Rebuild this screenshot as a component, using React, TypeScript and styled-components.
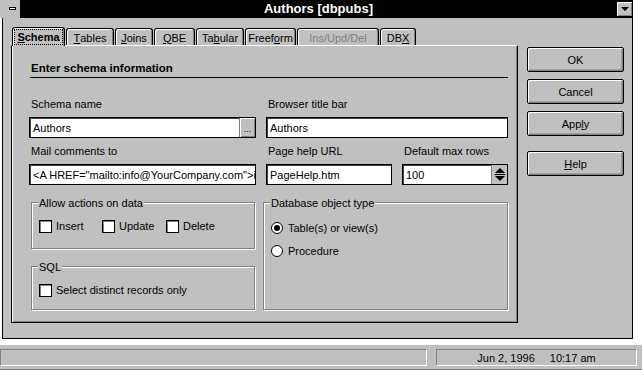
import React from "react";
import styled, { createGlobalStyle } from "styled-components";

const Global = createGlobalStyle`
  html, body { margin: 0; padding: 0; background: #fff; }
  body {
    width: 642px; height: 370px; overflow: hidden;
    font-family: "Liberation Sans", Arial, sans-serif;
    font-size: 11px; color: #000;
  }
`;

const Screen = styled.div`
  width: 642px;
  height: 370px;
  display: flex;
  flex-direction: column;
  background: #fff;
`;

const Window = styled.div`
  width: 633px;
  display: flex;
  flex-direction: column;
`;

const TitleBar = styled.div`
  height: 18px;
  display: flex;
  background: #000;
  padding-right: 1px;
`;

const SysBox = styled.div`
  width: 20px;
  height: 18px;
  box-sizing: border-box;
  background: #c0c0c0;
  padding: 7px 0 0 9px;
`;

const SysDash = styled.div`
  width: 7px;
  height: 3px;
  box-sizing: border-box;
  border: 1px solid #000;
  background: #fff;
`;

const Title = styled.div`
  flex: 1;
  color: #fff;
  font-weight: 700;
  font-size: 13px;
  line-height: 18px;
  text-align: center;
`;

const ArrowButton = styled.div`
  width: 15px;
  height: 14px;
  margin-top: 2px;
  box-sizing: border-box;
  background: #c0c0c0;
  box-shadow: inset 1px 1px 0 #fff, inset -1px -1px 0 #808080;
  display: flex;
  align-items: center;
  justify-content: center;
`;

const DownTri = styled.div`
  width: 0;
  height: 0;
  border-left: 4px solid transparent;
  border-right: 4px solid transparent;
  border-top: 4px solid #000;
`;

const Frame = styled.div`
  margin-left: 2px;
  width: 631px;
  height: 321px;
  box-sizing: border-box;
  border: 1px solid #000;
  border-top: none;
  background: #c0c0c0;
  display: flex;
  align-items: flex-start;
  padding: 9px 0 0 8px;
`;

const LeftCol = styled.div`
  width: 507px;
  display: flex;
  flex-direction: column;
`;

const TabRow = styled.div`
  height: 18px;
  display: flex;
  align-items: flex-end;
  padding-left: 1px;
`;

const Tab = styled.div<{ $w: number; $active?: boolean; $disabled?: boolean }>`
  box-sizing: border-box;
  width: ${(p) => p.$w}px;
  height: ${(p) => (p.$active ? 19 : 17)}px;
  margin-bottom: ${(p) => (p.$active ? -1 : 0)}px;
  margin-right: 1px;
  border: 1px solid #000;
  border-bottom: none;
  border-radius: 3px 3px 0 0;
  background: #c0c0c0;
  box-shadow: inset 1px 1px 0 #fff, inset -1px 0 0 #808080;
  display: flex;
  align-items: center;
  justify-content: center;
  padding-top: ${(p) => (p.$active ? 0 : 1)}px;
  font-weight: ${(p) => (p.$active ? 700 : 400)};
  color: ${(p) => (p.$disabled ? "#808080" : "#000")};
  position: relative;
  z-index: ${(p) => (p.$active ? 2 : 1)};
  white-space: nowrap;
`;

const Focus = styled.span`
  outline: 1px dotted #000;
  outline-offset: 1px;
  padding: 0 1px;
  line-height: 12px;
`;

const Panel = styled.div`
  box-sizing: border-box;
  width: 507px;
  height: 278px;
  background: #c0c0c0;
  border: 1px solid #000;
  border-top-color: #fff;
  box-shadow: inset 1px 0 0 #fff, inset -1px -1px 0 #808080;
  padding: 15px 9px 0 17px;
  position: relative;
  z-index: 1;
`;

const Heading = styled.div`
  font-weight: 700;
  font-size: 11.5px;
  line-height: 14px;
  height: 14px;
  padding-left: 2px;
`;

const Rule = styled.div`
  height: 1px;
  background: #000;
  margin: 2px 0 0 1px;
`;

const FieldGrid = styled.div`
  display: grid;
  grid-template-columns: 227px 242px;
  column-gap: 10px;
  row-gap: 6px;
  margin-top: 19px;
`;

const SubGrid = styled.div`
  display: grid;
  grid-template-columns: 126px 106px;
  column-gap: 10px;
`;

const Field = styled.div`
  display: flex;
  flex-direction: column;
  gap: 6px;
`;

const Label = styled.div`
  line-height: 14px;
  height: 14px;
  white-space: nowrap;
  padding-left: 2px;
`;

const InputBox = styled.div`
  box-sizing: border-box;
  height: 21px;
  border: 1px solid #000;
  box-shadow: inset 1px 1px 0 #404040;
  background: #fff;
  display: flex;
  overflow: hidden;
`;

const TextInput = styled.input`
  flex: 1;
  min-width: 0;
  border: 0;
  outline: 0;
  padding: 1px 0 0 3px;
  margin: 0;
  font: inherit;
  font-size: 11px;
  background: transparent;
  color: #000;
`;

const DotsButton = styled.div`
  width: 16px;
  box-sizing: border-box;
  background: #c0c0c0;
  border-left: 1px solid #808080;
  box-shadow: inset 1px 1px 0 #fff, inset -1px -1px 0 #808080;
  display: flex;
  align-items: flex-end;
  justify-content: center;
  font-size: 9px;
  line-height: 12px;
  padding-bottom: 2px;
`;

const Spinner = styled.div`
  width: 16px;
  box-sizing: border-box;
  background: #c0c0c0;
  border-left: 1px solid #808080;
  display: flex;
  flex-direction: column;
  align-items: center;
  justify-content: center;
  gap: 1px;
`;

const UpTri = styled.div`
  width: 0;
  height: 0;
  border-left: 5px solid transparent;
  border-right: 5px solid transparent;
  border-bottom: 5px solid #000;
`;

const SpinDown = styled.div`
  width: 0;
  height: 0;
  border-left: 5px solid transparent;
  border-right: 5px solid transparent;
  border-top: 5px solid #000;
`;

const SpinLine = styled.div`
  width: 10px;
  height: 1px;
  background: #000;
`;

const GroupRow = styled.div`
  display: grid;
  grid-template-columns: 224px 245px;
  column-gap: 8px;
  margin: 17px 0 0 2px;
`;

const Stack = styled.div`
  display: flex;
  flex-direction: column;
  gap: 17px;
`;

const Group = styled.div<{ $h: number; $pt: number; $gap?: number }>`
  position: relative;
  box-sizing: border-box;
  height: ${(p) => p.$h}px;
  border: 1px solid #808080;
  box-shadow: 1px 1px 0 #fff, inset 1px 1px 0 #fff;
  padding: ${(p) => p.$pt}px 0 0 7px;
  display: flex;
  flex-direction: column;
  gap: ${(p) => p.$gap ?? 0}px;
`;

const Caption = styled.span`
  position: absolute;
  top: -7px;
  left: 6px;
  padding: 0 1px;
  background: #c0c0c0;
  line-height: 14px;
  white-space: nowrap;
`;

const CheckRow = styled.div`
  display: flex;
  height: 14px;
`;

const Item = styled.label<{ $w?: number }>`
  display: flex;
  align-items: center;
  gap: 4px;
  width: ${(p) => (p.$w ? `${p.$w}px` : "auto")};
  line-height: 14px;
  white-space: nowrap;
`;

const CheckBox = styled.span`
  width: 13px;
  height: 13px;
  box-sizing: border-box;
  border: 1px solid #000;
  background: #fff;
  box-shadow: inset 1px 1px 0 #808080;
  flex: none;
`;

const Radio = styled.span<{ $on?: boolean }>`
  width: 12px;
  height: 12px;
  box-sizing: border-box;
  border: 1px solid #000;
  border-radius: 50%;
  background: #fff;
  flex: none;
  margin-right: 1px;
  display: flex;
  align-items: center;
  justify-content: center;
  &::after {
    content: "";
    display: ${(p) => (p.$on ? "block" : "none")};
    width: 6px;
    height: 6px;
    border-radius: 50%;
    background: #000;
  }
`;

const ButtonCol = styled.div`
  display: flex;
  flex-direction: column;
  gap: 7px;
  margin: 20px 0 0 9px;
  width: 97px;
`;

const Button = styled.button<{ $extra?: number }>`
  box-sizing: border-box;
  width: 97px;
  height: 25px;
  margin: ${(p) => p.$extra ?? 0}px 0 0 0;
  padding: 0;
  border: 1px solid #000;
  border-radius: 2px;
  background: #c0c0c0;
  box-shadow: inset 1px 1px 0 #fff, inset -1px -1px 0 #808080, inset -2px -2px 0 #a0a0a0;
  font: inherit;
  font-size: 11px;
  color: #000;
  text-align: center;
`;

const StatusBar = styled.div`
  margin-top: 5px;
  height: 26px;
  box-sizing: border-box;
  background: #c0c0c0;
  border-top: 1px solid #fff;
  border-bottom: 1px solid #808080;
  display: flex;
  gap: 9px;
  padding-top: 4px;
`;

const StatusPanel = styled.div<{ $w: number }>`
  width: ${(p) => p.$w}px;
  height: 17px;
  box-sizing: border-box;
  border: 1px solid;
  border-color: #808080 #fff #fff #808080;
  display: flex;
  align-items: center;
  justify-content: center;
  gap: 15px;
  line-height: 14px;
`;

export default function App() {
  return (
    <Screen>
      <Global />
      <Window>
        <TitleBar>
          <SysBox>
            <SysDash />
          </SysBox>
          <Title>Authors [dbpubs]</Title>
          <ArrowButton>
            <DownTri />
          </ArrowButton>
        </TitleBar>
        <Frame>
          <LeftCol>
            <TabRow>
              <Tab $w={53} $active>
                <Focus>
                  <u>S</u>chema
                </Focus>
              </Tab>
              <Tab $w={48}>
                <u>T</u>ables
              </Tab>
              <Tab $w={38}>
                <u>J</u>oins
              </Tab>
              <Tab $w={41}>
                <u>Q</u>BE
              </Tab>
              <Tab $w={48}>
                Ta<u>b</u>ular
              </Tab>
              <Tab $w={51}>
                Freef<u>o</u>rm
              </Tab>
              <Tab $w={82} $disabled>
                Ins/Upd/Del
              </Tab>
              <Tab $w={36}>
                DB<u>X</u>
              </Tab>
            </TabRow>
            <Panel>
              <Heading>Enter schema information</Heading>
              <Rule />
              <FieldGrid>
                <Field>
                  <Label>Schema name</Label>
                  <InputBox>
                    <TextInput readOnly value="Authors" />
                    <DotsButton>...</DotsButton>
                  </InputBox>
                </Field>
                <Field>
                  <Label>Browser title bar</Label>
                  <InputBox>
                    <TextInput readOnly value="Authors" />
                  </InputBox>
                </Field>
                <Field>
                  <Label>Mail comments to</Label>
                  <InputBox>
                    <TextInput
                      readOnly
                      value={'<A HREF="mailto:info@YourCompany.com">info@YourCompany.com</A>'}
                    />
                  </InputBox>
                </Field>
                <SubGrid>
                  <Field>
                    <Label>Page help URL</Label>
                    <InputBox>
                      <TextInput readOnly value="PageHelp.htm" />
                    </InputBox>
                  </Field>
                  <Field>
                    <Label>Default max rows</Label>
                    <InputBox>
                      <TextInput readOnly value="100" />
                      <Spinner>
                        <UpTri />
                        <SpinLine />
                        <SpinDown />
                      </Spinner>
                    </InputBox>
                  </Field>
                </SubGrid>
              </FieldGrid>
              <GroupRow>
                <Stack>
                  <Group $h={47} $pt={16}>
                    <Caption>Allow actions on data</Caption>
                    <CheckRow>
                      <Item $w={63}>
                        <CheckBox />
                        Insert
                      </Item>
                      <Item $w={64}>
                        <CheckBox />
                        Update
                      </Item>
                      <Item>
                        <CheckBox />
                        Delete
                      </Item>
                    </CheckRow>
                  </Group>
                  <Group $h={44} $pt={16}>
                    <Caption>SQL</Caption>
                    <CheckRow>
                      <Item>
                        <CheckBox />
                        Select distinct records only
                      </Item>
                    </CheckRow>
                  </Group>
                </Stack>
                <Group $h={108} $pt={18} $gap={9}>
                  <Caption>Database object type</Caption>
                  <CheckRow>
                    <Item>
                      <Radio $on />
                      Table(s) or view(s)
                    </Item>
                  </CheckRow>
                  <CheckRow>
                    <Item>
                      <Radio />
                      Procedure
                    </Item>
                  </CheckRow>
                </Group>
              </GroupRow>
            </Panel>
          </LeftCol>
          <ButtonCol>
            <Button>OK</Button>
            <Button>Cancel</Button>
            <Button>
              App<u>l</u>y
            </Button>
            <Button $extra={8}>
              <u>H</u>elp
            </Button>
          </ButtonCol>
        </Frame>
      </Window>
      <StatusBar>
        <StatusPanel $w={427} />
        <StatusPanel $w={201}>
          <span>Jun 2, 1996</span>
          <span>10:17 am</span>
        </StatusPanel>
      </StatusBar>
    </Screen>
  );
}
